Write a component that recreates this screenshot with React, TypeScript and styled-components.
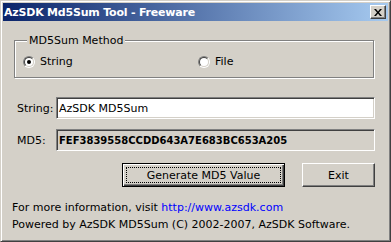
import styled, { createGlobalStyle } from "styled-components";

const GlobalStyle = createGlobalStyle`
  html, body {
    margin: 0;
    padding: 0;
    background: #d4d0c8;
  }
  body {
    font-family: "DejaVu Sans", Tahoma, sans-serif;
    font-size: 11px;
    color: #000000;
  }
`;

const Window = styled.div`
  width: 391px;
  height: 242px;
  box-sizing: border-box;
  background: #d4d0c8;
  border: 1px solid;
  border-color: #d4d0c8 #404040 #404040 #d4d0c8;
  box-shadow: inset 1px 1px #ffffff, inset -1px -1px #808080;
  padding: 2px;
  display: flex;
  flex-direction: column;
`;

const TitleBar = styled.div`
  height: 18px;
  flex: none;
  display: flex;
  align-items: center;
  justify-content: space-between;
  padding: 0 2px 0 1px;
  background: linear-gradient(to right, #0a246a, #a6caf0);
`;

const Title = styled.span`
  color: #ffffff;
  font-weight: bold;
  font-size: 11px;
  letter-spacing: -0.2px;
  white-space: nowrap;
`;

const CloseButton = styled.div`
  width: 16px;
  height: 14px;
  box-sizing: border-box;
  background: #d4d0c8;
  border: 1px solid;
  border-color: #ffffff #404040 #404040 #ffffff;
  box-shadow: inset -1px -1px #808080;
  display: flex;
  align-items: center;
  justify-content: center;
`;

const Client = styled.div`
  flex: 1;
  display: flex;
  flex-direction: column;
  padding: 0 13px 0 11px;
`;

const GroupBox = styled.fieldset`
  margin: 13px 1px 0 0;
  padding: 8px 8px 9px 8px;
  border: 1px solid #808080;
  box-shadow: inset 1px 1px #ffffff, 1px 1px #ffffff;
  display: grid;
  grid-template-columns: 175px 1fr;
  min-width: 0;
`;

const Legend = styled.legend`
  margin-left: 4px;
  padding: 0 2px;
  line-height: 13px;
  background: #d4d0c8;
`;

const RadioLabel = styled.label`
  display: flex;
  align-items: center;
  gap: 5px;
  height: 13px;
`;

const RadioOuter = styled.span`
  width: 12px;
  height: 12px;
  box-sizing: border-box;
  border-radius: 50%;
  border: 1px solid;
  border-color: #808080 #ffffff #ffffff #808080;
  display: flex;
  align-items: center;
  justify-content: center;
`;

const RadioInner = styled.span<{ $checked?: boolean }>`
  width: 10px;
  height: 10px;
  box-sizing: border-box;
  border-radius: 50%;
  border: 1px solid;
  border-color: #404040 #d4d0c8 #d4d0c8 #404040;
  background: #ffffff;
  display: flex;
  align-items: center;
  justify-content: center;
  &::after {
    content: "";
    width: 4px;
    height: 4px;
    border-radius: 50%;
    background: ${({ $checked }) => ($checked ? "#000000" : "transparent")};
  }
`;

const FieldRow = styled.div<{ $top: number }>`
  display: grid;
  grid-template-columns: 42px 1fr;
  align-items: center;
  margin-top: ${({ $top }) => $top}px;
`;

const FieldLabel = styled.span`
  padding-left: 3px;
`;

const Box = styled.div<{ $readOnly?: boolean }>`
  height: 22px;
  box-sizing: border-box;
  border: 1px solid;
  border-color: #808080 #ffffff #ffffff #808080;
  box-shadow: inset 1px 1px #404040, inset -1px -1px #d4d0c8;
  background: ${({ $readOnly }) => ($readOnly ? "#d4d0c8" : "#ffffff")};
  font-weight: ${({ $readOnly }) => ($readOnly ? "bold" : "normal")};
  font-size: ${({ $readOnly }) => ($readOnly ? "10px" : "11px")};
  display: flex;
  align-items: center;
  padding-left: 2px;
  white-space: nowrap;
  overflow: hidden;
`;

const ButtonRow = styled.div`
  display: flex;
  justify-content: flex-end;
  gap: 17px;
  margin-top: 12px;
`;

const Button = styled.button<{ $width: number; $default?: boolean }>`
  width: ${({ $width }) => $width}px;
  height: 24px;
  box-sizing: border-box;
  margin: 0;
  padding: ${({ $default }) => ($default ? "2px" : "0")};
  font-family: inherit;
  font-size: 11px;
  color: #000000;
  background: #d4d0c8;
  border: 1px solid;
  border-color: ${({ $default }) =>
    $default ? "#000000" : "#ffffff #404040 #404040 #ffffff"};
  box-shadow: ${({ $default }) =>
    $default
      ? "inset 1px 1px #ffffff, inset -1px -1px #404040, inset -2px -2px #808080"
      : "inset -1px -1px #808080"};
  display: flex;
  align-items: stretch;
  justify-content: center;
`;

const FocusRect = styled.span<{ $focus?: boolean }>`
  flex: 1;
  display: flex;
  align-items: center;
  justify-content: center;
  margin: 1px;
  border: 1px dotted ${({ $focus }) => ($focus ? "#000000" : "transparent")};
`;

const Footer = styled.div`
  margin: 12px 0 0 -2px;
  line-height: 17px;
`;

const Link = styled.span`
  color: #0000ff;
`;

const CloseIcon = () => (
  <svg width="8" height="7" viewBox="0 0 8 7">
    <path d="M0 0h2l2 2.5L6 0h2L5 3.5 8 7H6L4 4.5 2 7H0l3-3.5z" fill="#000" />
  </svg>
);

const Radio = ({ checked, label }: { checked?: boolean; label: string }) => (
  <RadioLabel>
    <RadioOuter>
      <RadioInner $checked={checked} />
    </RadioOuter>
    {label}
  </RadioLabel>
);

const App = () => {
  return (
    <>
      <GlobalStyle />
      <Window>
        <TitleBar>
          <Title>AzSDK Md5Sum Tool - Freeware</Title>
          <CloseButton>
            <CloseIcon />
          </CloseButton>
        </TitleBar>
        <Client>
          <GroupBox>
            <Legend>MD5Sum Method</Legend>
            <Radio checked label="String" />
            <Radio label="File" />
          </GroupBox>
          <FieldRow $top={19}>
            <FieldLabel>String:</FieldLabel>
            <Box>AzSDK MD5Sum</Box>
          </FieldRow>
          <FieldRow $top={10}>
            <FieldLabel>MD5:</FieldLabel>
            <Box $readOnly>FEF3839558CCDD643A7E683BC653A205</Box>
          </FieldRow>
          <ButtonRow>
            <Button $width={163} $default>
              <FocusRect $focus>Generate MD5 Value</FocusRect>
            </Button>
            <Button $width={73}>
              <FocusRect>Exit</FocusRect>
            </Button>
          </ButtonRow>
          <Footer>
            <div>
              For more information, visit <Link>http://www.azsdk.com</Link>
            </div>
            <div>Powered by AzSDK MD5Sum (C) 2002-2007, AzSDK Software.</div>
          </Footer>
        </Client>
      </Window>
    </>
  );
};

export default App;
